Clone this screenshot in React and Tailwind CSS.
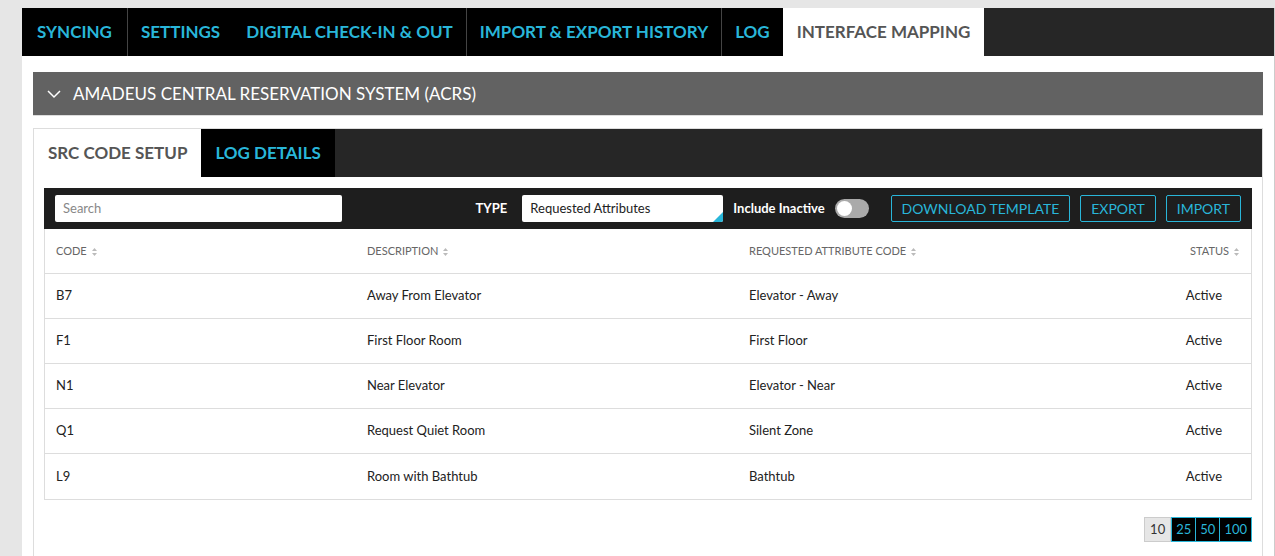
import React from "react";

const Sort = () => (
  <svg width="7" height="10" viewBox="0 0 7 10" className="inline-block ml-1"><path d="M3.5 1 L6 4 H1 Z M3.5 9 L6 6 H1 Z" fill="#bbb"/></svg>
);

const rows = [
  ["B7", "Away From Elevator", "Elevator - Away"],
  ["F1", "First Floor Room", "First Floor"],
  ["N1", "Near Elevator", "Elevator - Near"],
  ["Q1", "Request Quiet Room", "Silent Zone"],
  ["L9", "Room with Bathtub", "Bathtub"],
];

export default function App() {
  const tabs = ["SYNCING", "SETTINGS", "DIGITAL CHECK-IN & OUT", "IMPORT & EXPORT HISTORY", "LOG"];
  return (
    <div className="w-[1275px] h-[556px] bg-[#e6e6e6] pt-[8px] pl-[22px] overflow-hidden" style={{ fontFamily: "Lato, 'Open Sans', sans-serif" }}>
      <div className="bg-white h-full border-r border-[#ccc]">
        <div className="flex h-[48px] bg-[#262626]">
          {tabs.map((t, i) => (
            <div key={t} className={`bg-black text-[#29b6d9] text-[17px] font-bold flex items-center ${i === 0 ? "px-[15px]" : "px-[13px]"} ${i === 0 || i === 3 ? "border-r border-[#444]" : ""} ${i === 2 ? "border-r border-[#444]" : ""}`}>{t}</div>
          ))}
          <div className="bg-white text-[#555] text-[17px] font-bold flex items-center px-[14px]">INTERFACE MAPPING</div>
        </div>
        <div className="px-[11px] pt-[16px]">
          <div className="h-[44px] bg-[#626262] flex items-center px-[14px] text-white text-[17px] border-b border-[#ddd]">
            <svg width="14" height="10" viewBox="0 0 14 10" className="mr-[12px]"><path d="M1 2 L7 8 L13 2" stroke="white" strokeWidth="1.5" fill="none"/></svg>
            AMADEUS CENTRAL RESERVATION SYSTEM (ACRS)
          </div>
          <div className="mt-[12px] border border-[#ddd] h-[500px]">
            <div className="flex h-[48px] bg-[#262626]">
              <div className="bg-white text-[#555] text-[17px] font-bold flex items-center px-[14px]">SRC CODE SETUP</div>
              <div className="bg-black text-[#29b6d9] text-[17px] font-bold flex items-center px-[14px]">LOG DETAILS</div>
            </div>
            <div className="px-[10px] pt-[11px]">
              <div className="h-[41px] bg-[#1e1e1e] flex items-center px-[11px] text-[13px]">
                <div className="w-[287px] h-[27px] bg-white rounded-[2px] flex items-center px-[8px] text-[#888]">Search</div>
                <div className="flex-1" />
                <span className="text-white font-bold mr-[15px]">TYPE</span>
                <div className="relative w-[201px] h-[27px] bg-white rounded-[2px] flex items-center px-[8px] text-[#222] overflow-hidden">
                  Requested Attributes
                  <div className="absolute right-0 bottom-0 w-0 h-0 border-l-[10px] border-l-transparent border-b-[10px] border-b-[#29b6d9]" />
                </div>
                <span className="text-white font-bold ml-[10px]">Include Inactive</span>
                <div className="ml-[10px] w-[34px] h-[19px] rounded-full bg-[#aaa] flex items-center px-[2px]"><div className="w-[15px] h-[15px] rounded-full bg-white" /></div>
                <div className="ml-[22px] h-[27px] px-[10px] flex items-center border border-[#29b6d9] rounded-[2px] text-[#29b6d9] text-[14px]">DOWNLOAD TEMPLATE</div>
                <div className="ml-[10px] h-[27px] px-[10px] flex items-center border border-[#29b6d9] rounded-[2px] text-[#29b6d9] text-[14px]">EXPORT</div>
                <div className="ml-[10px] h-[27px] px-[10px] flex items-center border border-[#29b6d9] rounded-[2px] text-[#29b6d9] text-[14px]">IMPORT</div>
              </div>
              <div className="border border-t-0 border-[#ddd] text-[13px] text-[#222]">
                <div className="flex h-[45px] items-center text-[11px] text-[#666] border-b border-[#ddd] px-[11px]">
                  <div className="w-[311px]">CODE<Sort/></div>
                  <div className="w-[382px]">DESCRIPTION<Sort/></div>
                  <div className="flex-1">REQUESTED ATTRIBUTE CODE<Sort/></div>
                  <div>STATUS<Sort/></div>
                </div>
                {rows.map((r, i) => (
                  <div key={r[0]} className={`flex h-[45px] items-center px-[11px] ${i < 4 ? "border-b border-[#ddd]" : ""}`}>
                    <div className="w-[311px]">{r[0]}</div>
                    <div className="w-[382px]">{r[1]}</div>
                    <div className="flex-1">{r[2]}</div>
                    <div className="pr-[18px]">Active</div>
                  </div>
                ))}
              </div>
              <div className="flex justify-end mt-[17px] text-[13px]">
                <div className="h-[25px] px-[5px] flex items-center bg-[#e6e6e6] border border-[#ccc] text-[#333]">10</div>
                <div className="h-[25px] px-[4px] flex items-center bg-black border border-[#29b6d9] text-[#29b6d9]">25</div>
                <div className="h-[25px] px-[4px] flex items-center bg-black border border-l-0 border-[#29b6d9] text-[#29b6d9]">50</div>
                <div className="h-[25px] px-[4px] flex items-center bg-black border border-l-0 border-[#29b6d9] text-[#29b6d9]">100</div>
              </div>
            </div>
          </div>
        </div>
      </div>
    </div>
  );
}
